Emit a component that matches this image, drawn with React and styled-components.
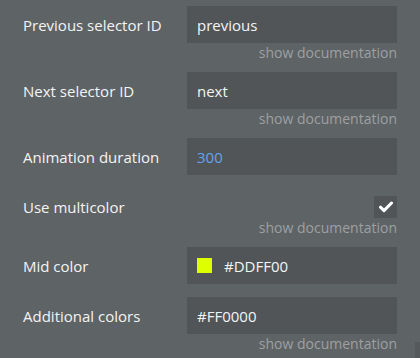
import React from "react";
import styled, { createGlobalStyle } from "styled-components";

const Global = createGlobalStyle`
  html, body {
    margin: 0;
    padding: 0;
    background: #5e6366;
    font-family: "Open Sans", "Noto Sans", sans-serif;
  }
  * { box-sizing: border-box; }
`;

const Panel = styled.div`
  position: relative;
  width: 420px;
  height: 358px;
  overflow: hidden;
  background: #5e6366;
  padding: 6px 23px 0 23px;
  display: flex;
  flex-direction: column;
`;

const Field = styled.div`
  display: flex;
  flex-direction: column;
  margin-bottom: ${(p) => p.$mb}px;
`;

const Row = styled.div`
  display: grid;
  grid-template-columns: 164px 210px;
  align-items: center;
  height: ${(p) => p.$h}px;
`;

const Label = styled.div`
  font-size: 15px;
  color: #f4f4f4;
  white-space: nowrap;
`;

const InputBox = styled.div`
  height: 37px;
  background: #515558;
  display: flex;
  align-items: center;
  padding-left: 10px;
  gap: 12px;
  font-size: 15px;
  color: ${(p) => p.$color || "#f4f4f4"};
`;

const Swatch = styled.span`
  width: 15px;
  height: 15px;
  background: ${(p) => p.$c};
  flex: none;
`;

const CheckCell = styled.div`
  display: flex;
  justify-content: flex-end;
`;

const CheckBox = styled.div`
  width: 23px;
  height: 22px;
  background: #515558;
  border-radius: 1px;
  display: flex;
  align-items: center;
  justify-content: center;
`;

const Doc = styled.div`
  text-align: right;
  font-size: 14px;
  line-height: 20px;
  color: #9da0a3;
  white-space: nowrap;
`;

const ScrollHint = styled.div`
  position: absolute;
  right: 0;
  bottom: 0;
  width: 5px;
  height: 16px;
  background: #55595c;
`;

const fields = [
  { label: "Previous selector ID", value: "previous", doc: true, mb: 9 },
  { label: "Next selector ID", value: "next", doc: true, mb: 9 },
  { label: "Animation duration", value: "300", color: "#62a3ef", mb: 21 },
  { label: "Use multicolor", check: true, doc: true, mb: 9 },
  { label: "Mid color", value: "#DDFF00", swatch: "#DDFF00", mb: 13 },
  { label: "Additional colors", value: "#FF0000", doc: true, mb: 0 },
];

export default function App() {
  return (
    <>
      <Global />
      <Panel>
        {fields.map((f) => (
          <Field key={f.label} $mb={f.mb}>
            <Row $h={f.check ? 22 : 37}>
              <Label>{f.label}</Label>
              {f.check ? (
                <CheckCell>
                  <CheckBox>
                    <svg width="14" height="12" viewBox="0 0 14 12">
                      <path
                        d="M1.5 6.2 L5 9.6 L12.5 2"
                        fill="none"
                        stroke="#ffffff"
                        strokeWidth="3"
                        strokeLinecap="round"
                        strokeLinejoin="round"
                      />
                    </svg>
                  </CheckBox>
                </CheckCell>
              ) : (
                <InputBox $color={f.color}>
                  {f.swatch && <Swatch $c={f.swatch} />}
                  {f.value}
                </InputBox>
              )}
            </Row>
            {f.doc && <Doc>show documentation</Doc>}
          </Field>
        ))}
        <ScrollHint />
      </Panel>
    </>
  );
}
